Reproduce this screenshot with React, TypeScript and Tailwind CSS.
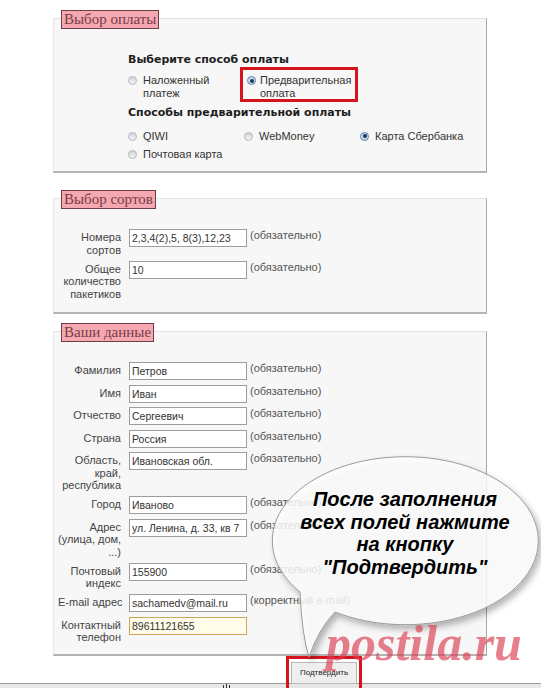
import type { ReactNode } from 'react'

const SANS = "font-['Liberation_Sans',Arial,sans-serif]"

function Legend({ children }: { children: ReactNode }) {
  return (
    <div className="relative z-10 ml-[8px] self-start border border-[#6e3d45] bg-[#f4a8b2] px-[2px] font-['Liberation_Serif','Times_New_Roman',serif] text-[15px] leading-[17px] text-[#7a3b44]">
      {children}
    </div>
  )
}

function Panel({ children, className = '' }: { children: ReactNode; className?: string }) {
  return (
    <div
      className={`-mt-[11px] border border-t-[#e3e3e3] border-l-[#e8e8e8] border-r-[#a9a9a9] border-b-2 border-b-[#b4b4b4] bg-[#f7f7f7] ${className}`}
    >
      {children}
    </div>
  )
}

function Radio({ checked = false }: { checked?: boolean }) {
  return (
    <span
      className={`mt-[2px] flex h-[9px] w-[9px] shrink-0 items-center justify-center rounded-full border ${
        checked
          ? 'border-[#5f82a8] bg-[#c8dbee]'
          : 'border-[#b5b5b5] bg-linear-to-b from-[#d2d2d2] to-[#f6f6f6]'
      }`}
    >
      {checked && <span className="h-[4px] w-[4px] rounded-full bg-[#18375d]" />}
    </span>
  )
}

function Option({ label, checked }: { label: string; checked?: boolean }) {
  return (
    <div className="flex items-start gap-[6px] leading-[13px]">
      <Radio checked={checked} />
      <span>{label}</span>
    </div>
  )
}

type FieldProps = {
  label: string[]
  value: string
  note?: string
  highlight?: boolean
}

function Field({ label, value, note, highlight }: FieldProps) {
  return (
    <div className="flex items-start">
      <div className="w-[63px] shrink-0 whitespace-nowrap pt-[2px] text-right leading-[12.5px] text-[#444]">
        {label.map((line) => (
          <div key={line}>{line}</div>
        ))}
      </div>
      <input
        readOnly
        value={value}
        className={`ml-[8px] h-[18px] w-[118px] shrink-0 border px-[2px] text-[10.5px] text-[#333] outline-none ${
          highlight ? 'border-[#c9a85c] bg-[#fffde9]' : 'border-[#9d9d9d] bg-white'
        }`}
      />
      {note && <div className="ml-[3px] whitespace-nowrap leading-[13px] text-[#555]">{note}</div>}
    </div>
  )
}

const sorts: FieldProps[] = [
  { label: ['Номера', 'сортов'], value: '2,3,4(2),5, 8(3),12,23', note: '(обязательно)' },
  { label: ['Общее', 'количество', 'пакетиков'], value: '10', note: '(обязательно)' },
]

const person: FieldProps[] = [
  { label: ['Фамилия'], value: 'Петров', note: '(обязательно)' },
  { label: ['Имя'], value: 'Иван', note: '(обязательно)' },
  { label: ['Отчество'], value: 'Сергеевич', note: '(обязательно)' },
  { label: ['Страна'], value: 'Россия', note: '(обязательно)' },
  { label: ['Область,', 'край,', 'республика'], value: 'Ивановская обл.', note: '(обязательно)' },
  { label: ['Город'], value: 'Иваново', note: '(обязательно)' },
  { label: ['Адрес', '(улица, дом,', '...)'], value: 'ул. Ленина, д. 33, кв 7', note: '(обязательно)' },
  { label: ['Почтовый', 'индекс'], value: '155900', note: '(обязательно)' },
  { label: ['E-mail адрес'], value: 'sachamedv@mail.ru', note: '(корректный e-mail)' },
  { label: ['Контактный', 'телефон'], value: '89611121655', highlight: true },
]

function Bubble() {
  return (
    <>
      <svg className="pointer-events-none absolute left-0 top-0" width={541} height={688} viewBox="0 0 541 688">
        <defs>
          <filter id="bubble-shadow" x="-10%" y="-10%" width="130%" height="130%">
            <feDropShadow dx="3" dy="4" stdDeviation="3" floodColor="#000" floodOpacity="0.35" />
          </filter>
        </defs>
        <path
          d="M 300 592 Q 302 636 309 657 Q 318 630 335 612 A 133 84 0 1 0 300 592 Z"
          fill="#ffffff"
          fillOpacity="0.8"
          stroke="#9a9a9a"
          strokeWidth="1"
          filter="url(#bubble-shadow)"
        />
      </svg>
      <div className="pointer-events-none absolute left-[272px] top-[488px] w-[266px] text-center font-['Liberation_Sans',Arial,sans-serif] text-[20px] leading-[22.5px] font-bold italic text-black">
        <div>После заполнения</div>
        <div>всех полей нажмите</div>
        <div>на кнопку</div>
        <div>"Подтвердить"</div>
      </div>
    </>
  )
}

export default function App() {
  return (
    <div className={`relative h-[688px] w-[541px] overflow-hidden bg-white text-[11px] text-[#333] ${SANS}`}>
      <div className="flex flex-col pl-[53px] pr-[54px] pt-[10px]">
        <Legend>Выбор оплаты</Legend>
        <Panel className="pl-[74px] pt-[34px] pb-[10.5px]">
          <div className="font-['DejaVu_Sans',Verdana,sans-serif] text-[11px] leading-[14px] font-bold text-[#1e1e1e]">
            Выберите способ оплаты
          </div>
          <div className="flex items-start">
            <div className="mt-[7px] flex w-[112px] items-start gap-[6px] leading-[12.5px]">
              <Radio />
              <span>
                Наложенный
                <br />
                платеж
              </span>
            </div>
            <div className="flex items-start gap-[4px] border-[3px] border-[#d6141b] px-[4px] pt-[4px] leading-[12.5px]">
              <Radio checked />
              <span>
                Предварительная
                <br />
                оплата
              </span>
            </div>
          </div>
          <div className="mt-[4px] font-['DejaVu_Sans',Verdana,sans-serif] text-[11px] leading-[14px] font-bold text-[#1e1e1e]">
            Способы предварительной оплаты
          </div>
          <div className="mt-[9.5px] grid grid-cols-[116px_116px_auto]">
            <Option label="QIWI" />
            <Option label="WebMoney" />
            <Option label="Карта Сбербанка" checked />
          </div>
          <div className="mt-[5px]">
            <Option label="Почтовая карта" />
          </div>
        </Panel>

        <div className="mt-[17px] flex flex-col">
          <Legend>Выбор сортов</Legend>
          <Panel className="pl-[4px] pt-[30px] pb-[12px]">
            <div className="flex flex-col gap-[4.5px]">
              {sorts.map((f) => (
                <Field key={f.label[0]} {...f} />
              ))}
            </div>
          </Panel>
        </div>

        <div className="mt-[9px] flex flex-col">
          <Legend>Ваши данные</Legend>
          <Panel className="pl-[4px] pt-[30px] pb-[10.5px]">
            <div className="flex flex-col gap-[4.5px]">
              {person.map((f) => (
                <Field key={f.label[0]} {...f} />
              ))}
            </div>
          </Panel>
        </div>
      </div>

      <div className="relative h-[33px]">
        <div className="h-[27px]" />
        <div className="h-[6px] border-t border-[#9a9a9a] bg-[#e7e7e7]" />
        <svg className="absolute left-[222px] top-[28px]" width={9} height={5} viewBox="0 0 9 5">
          <rect x="1" y="1" width="1" height="4" fill="#333" />
          <rect x="4" y="0" width="1" height="5" fill="#333" />
          <rect x="7" y="1" width="1" height="4" fill="#333" />
        </svg>
        <div className="absolute left-[286px] top-0 h-[40px] w-[76px] border-[3px] border-[#d6141b] pl-[2px] pt-[3px]">
          <button className="flex h-[22px] w-[66px] items-center justify-center border border-[#b9b9b9] bg-[#efefef] text-[8px] text-[#222]">
            Подтвердить
          </button>
        </div>
      </div>

      <Bubble />

      <div className="pointer-events-none absolute left-[326px] top-[618px] font-['Liberation_Serif',serif] text-[50px] leading-none font-bold italic text-[#dc3a50]/65">
        postila.ru
      </div>
    </div>
  )
}
